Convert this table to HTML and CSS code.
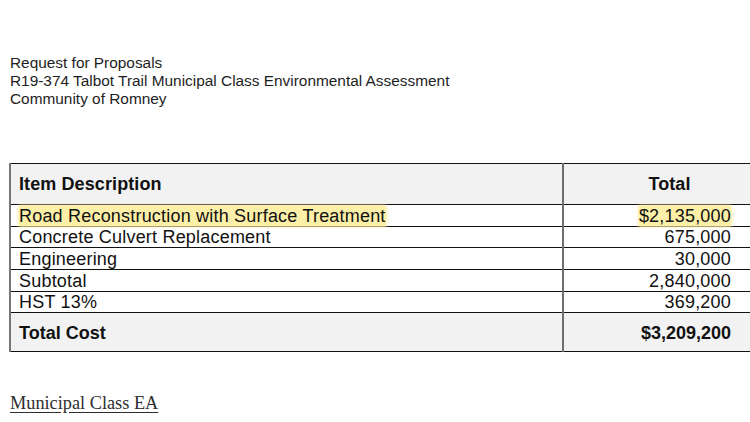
FILE: index.html
```html
<!DOCTYPE html>
<html lang="en">
<head>
<meta charset="utf-8">
<title>Talbot Trail Cost Estimate</title>
<link rel="stylesheet" href="styles.css">
</head>
<body>
<div class="page">
  <div class="doc-head">
    <div>Request for Proposals</div>
    <div>R19-374 Talbot Trail Municipal Class Environmental Assessment</div>
    <div>Community of Romney</div>
  </div>
  <table class="cost">
    <thead>
      <tr class="head-row">
        <th class="desc">Item Description</th>
        <th class="amt">Total</th>
      </tr>
    </thead>
    <tbody>
      <tr class="row tall">
        <td class="desc"><span class="hl">Road Reconstruction with Surface Treatment</span></td>
        <td class="amt"><span class="hl">$2,135,000</span></td>
      </tr>
      <tr class="row short">
        <td class="desc">Concrete Culvert Replacement</td>
        <td class="amt">675,000</td>
      </tr>
      <tr class="row tall">
        <td class="desc">Engineering</td>
        <td class="amt">30,000</td>
      </tr>
      <tr class="row tall">
        <td class="desc">Subtotal</td>
        <td class="amt">2,840,000</td>
      </tr>
      <tr class="row short">
        <td class="desc">HST 13%</td>
        <td class="amt">369,200</td>
      </tr>
      <tr class="total-row">
        <td class="desc">Total Cost</td>
        <td class="amt">$3,209,200</td>
      </tr>
    </tbody>
  </table>
  <div class="footer-link"><span class="link">Municipal Class EA</span></div>
</div>
</body>
</html>
```
FILE: styles.css
```css
html, body {
  margin: 0;
  padding: 0;
  background: #ffffff;
  overflow: hidden;
}
.page {
  width: 750px;
  height: 422px;
  overflow: hidden;
  padding-left: 9px;
  box-sizing: border-box;
}
.doc-head {
  margin-top: 54px;
  margin-left: 1px;
  font-family: "Liberation Sans", Arial, sans-serif;
  font-size: 15.4px;
  line-height: 18px;
  color: #1e1e1e;
}
.cost {
  margin-top: 55px;
  width: 762px;
  border-collapse: collapse;
  font-family: "Liberation Sans", Arial, sans-serif;
  font-size: 18px;
  color: #111111;
  table-layout: fixed;
}
.cost th, .cost td {
  padding: 0;
  border-top: 1px solid #111111;
  border-bottom: 1px solid #111111;
}
.cost .desc {
  width: 543px;
  text-align: left;
  padding-left: 8px;
  border-left: 2px solid #777777;
  border-right: 2px solid #6e6e6e;
}
.cost .amt {
  text-align: right;
  padding-right: 40px;
}
.head-row th {
  height: 40px;
  background: #f2f2f2;
  font-weight: bold;
  line-height: 20px;
  letter-spacing: 0.1px;
}
.head-row th.amt {
  text-align: center;
  padding-right: 0;
  padding-left: 4px;
}
.row td {
  line-height: 20px;
  letter-spacing: 0.2px;
}
.row.tall td {
  height: 21px;
}
.row.short td {
  height: 20px;
}
.total-row td {
  height: 39px;
  background: #f2f2f2;
  font-weight: bold;
  line-height: 20px;
  padding-top: 2px;
  box-sizing: border-box;
}
.hl {
  background: #fcefa8;
  box-shadow: 0 0 3px 1px #fcefa8;
  border-radius: 2px;
}
.footer-link {
  margin-top: 41px;
  margin-left: 1px;
  font-family: "Liberation Serif", "Times New Roman", serif;
  font-size: 18.3px;
  color: #2e2e2e;
}
.link {
  text-decoration: underline;
  text-underline-offset: 3px;
}
```
